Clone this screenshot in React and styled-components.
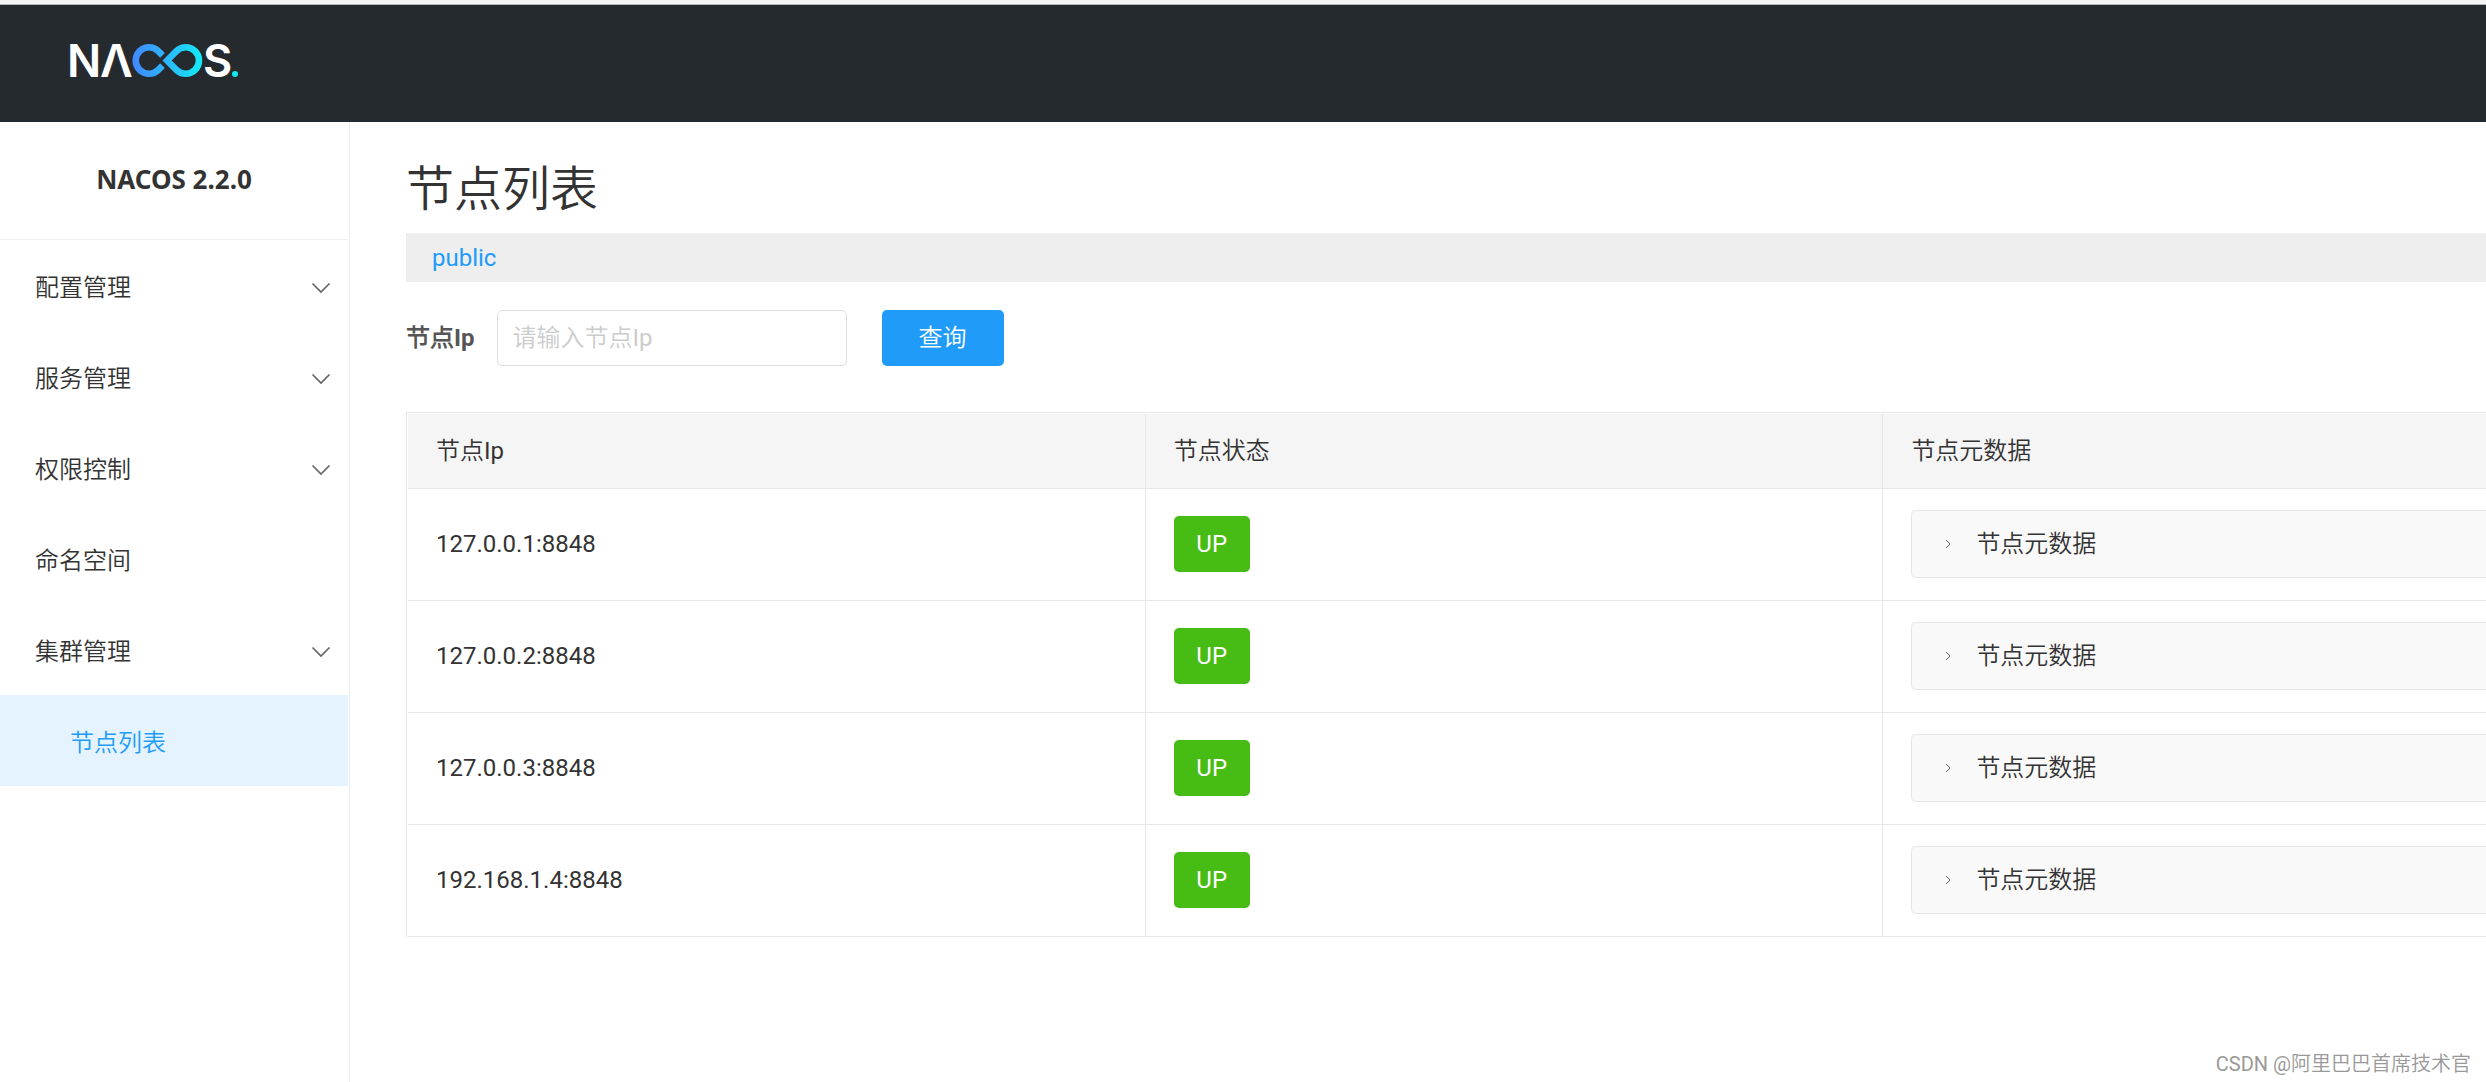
import React, { useState } from "react";
import styled, { createGlobalStyle } from "styled-components";

const menus = [
  { name: "配置管理", children: [] },
  { name: "服务管理", children: [] },
  { name: "权限控制", children: [] },
  { name: "命名空间" },
  { name: "集群管理", children: ["节点列表"] },
];

const nodes = [
  { address: "127.0.0.1:8848", state: "UP" },
  { address: "127.0.0.2:8848", state: "UP" },
  { address: "127.0.0.3:8848", state: "UP" },
  { address: "192.168.1.4:8848", state: "UP" },
];

const Logo = () => (
  <LogoSvg viewBox="0 0 170 34" role="img" aria-label="NACOS">
    <defs>
      <linearGradient id="loop" gradientUnits="userSpaceOnUse" x1="62" y1="0" x2="132" y2="0">
        <stop offset="0" stopColor="#4286ff" />
        <stop offset="1" stopColor="#14eaf6" />
      </linearGradient>
    </defs>
    <LogoText x="-3" y="33">N</LogoText>
    <LogoText x="30" y="33">Λ</LogoText>
    <g fill="none" stroke="url(#loop)" strokeWidth="6.6">
      <path d="M92.5 11.4L88.3 7.2A13.2 13.2 0 1 0 88.3 25.8L92.5 21.6" />
      <path d="M97.1 16.5L106.4 7.2A13.2 13.2 0 1 1 106.4 25.8Z" />
    </g>
    <LogoText x="133" y="33">S</LogoText>
    <circle cx="165" cy="30" r="3" fill="#14eaf6" />
  </LogoSvg>
);

const Chevron = () => (
  <svg width="20" height="12" viewBox="0 0 20 12" aria-hidden="true">
    <path d="M1.5 1.5L10 10L18.5 1.5" fill="none" stroke="#666" strokeWidth="1.7" />
  </svg>
);

const Arrow = () => (
  <svg width="6" height="10" viewBox="0 0 6 10" aria-hidden="true">
    <path d="M1 1L5 5L1 9" fill="none" stroke="#666" strokeWidth="1" />
  </svg>
);

const Sidebar = () => {
  const [open, setOpen] = useState("集群管理");

  return (
    <Aside>
      <Version>NACOS 2.2.0</Version>
      <Menu>
        {menus.map((menu) => (
          <li key={menu.name}>
            <MenuButton
              type="button"
              onClick={() => setOpen(open === menu.name ? "" : menu.name)}
            >
              {menu.name}
              {menu.children && <Chevron />}
            </MenuButton>
            {open === menu.name &&
              menu.children &&
              menu.children.map((child) => (
                <SubLink href="#/clusterManagement" key={child}>
                  {child}
                </SubLink>
              ))}
          </li>
        ))}
      </Menu>
    </Aside>
  );
};

const App = () => {
  const [ip, setIp] = useState("");
  const [list, setList] = useState(nodes);

  const search = (e) => {
    e.preventDefault();
    setList(nodes.filter((node) => node.address.includes(ip)));
  };

  return (
    <Page>
      <GlobalStyle />
      <Header>
        <Logo />
      </Header>
      <Body>
        <Sidebar />
        <Main>
          <Title>节点列表</Title>
          <Namespace>
            <a href="#/public">public</a>
          </Namespace>
          <SearchForm onSubmit={search}>
            <Label htmlFor="ip">节点Ip</Label>
            <Input
              id="ip"
              type="text"
              value={ip}
              placeholder="请输入节点Ip"
              onChange={(e) => setIp(e.target.value)}
            />
            <Button type="submit">查询</Button>
          </SearchForm>
          <TableBox>
            <Table>
              <thead>
                <tr>
                  <Th $width="35.5%">节点Ip</Th>
                  <Th $width="35.5%">节点状态</Th>
                  <Th>节点元数据</Th>
                </tr>
              </thead>
              <tbody>
                {list.map((node) => (
                  <tr key={node.address}>
                    <Td>{node.address}</Td>
                    <Td>
                      <Tag>{node.state}</Tag>
                    </Td>
                    <Td>
                      <Panel type="button">
                        <Arrow />
                        节点元数据
                      </Panel>
                    </Td>
                  </tr>
                ))}
              </tbody>
            </Table>
          </TableBox>
        </Main>
      </Body>
      <Watermark>CSDN @阿里巴巴首席技术官</Watermark>
    </Page>
  );
};

//STYLING
const GlobalStyle = createGlobalStyle`
* {
  box-sizing: border-box;
}
body {
  margin: 0;
  background-color: #fff;
  color: #333;
  font-family: Roboto, "Noto Sans CJK SC DemiLight", "Noto Sans CJK SC Light", "Noto Sans CJK SC", sans-serif;
  font-size: 24px;
  line-height: 36px;
}
button, input {
  font: inherit;
  color: inherit;
}
a {
  color: #209bfa;
  text-decoration: none;
}
`;

const Page = styled.div`
position: relative;
display: flex;
flex-direction: column;
min-height: 100vh;
border-top: 4px solid #f5f5f5;
overflow: hidden;
`;

const Header = styled.header`
display: flex;
padding: 39px 70px 44px;
border-top: 1px solid #b4b6b7;
background-color: #252a2f;
`;

const LogoSvg = styled.svg`
width: 170px;
height: 34px;
overflow: visible;
`;

const LogoText = styled.text`
font-family: Inter, sans-serif;
font-size: 45px;
font-weight: 600;
fill: #fff;
`;

const Body = styled.div`
display: flex;
flex: 1;
`;

// sidebar
const Aside = styled.aside`
flex: none;
width: 350px;
padding-right: 1px;
border-right: 1px solid #eee;
`;

const Version = styled.h2`
margin: 0;
padding: 39px 0 42px;
border-bottom: 1px solid #eee;
font-family: "Noto Sans", sans-serif;
font-size: 26px;
font-weight: 700;
text-align: center;
`;

const Menu = styled.ul`
margin: 0;
padding: 0;
list-style: none;
`;

const MenuButton = styled.button`
display: flex;
align-items: center;
justify-content: space-between;
width: 100%;
height: 91px;
padding: 4px 17px 0 35px;
border: none;
background: none;
cursor: pointer;
`;

const SubLink = styled.a`
display: flex;
align-items: center;
height: 91px;
padding: 4px 0 0 70px;
background-color: #e4f3fe;
`;

// content
const Main = styled.main`
flex: 1;
min-width: 0;
padding-left: 56px;
`;

const Title = styled.h1`
margin: 32px 0 7px;
font-size: 48px;
font-weight: 400;
line-height: 72px;
`;

const Namespace = styled.div`
padding: 7px 26px 6px;
background-color: #eee;
`;

const SearchForm = styled.form`
display: flex;
align-items: center;
margin: 28px 0 46px;
`;

const Label = styled.label`
margin-right: 22px;
color: #555;
font-weight: 700;
`;

const Input = styled.input`
width: 350px;
height: 56px;
margin-right: 35px;
padding: 0 15px;
border: 1px solid #ddd;
border-radius: 5px;

&::placeholder {
  color: #ccc;
}
`;

const Button = styled.button`
width: 122px;
height: 56px;
padding: 0;
border: none;
border-radius: 5px;
background-color: #209bfa;
color: #fff;
cursor: pointer;
`;

const TableBox = styled.div`
padding: 1px 0 0 1px;
border-top: 1px solid #e6e6e6;
border-left: 1px solid #e6e6e6;
`;

const Table = styled.table`
width: 100%;
table-layout: fixed;
border-collapse: separate;
border-spacing: 0;
`;

const Th = styled.th`
width: ${(props) => props.$width || "auto"};
height: 75px;
padding: 0 28px;
border-bottom: 1px solid #e6e6e6;
background-color: #f5f5f5;
font-weight: 400;
text-align: left;

&:not(:last-child) {
  border-right: 1px solid #e6e6e6;
}
`;

const Td = styled.td`
height: 112px;
padding: 0 28px 2px;
border-bottom: 1px solid #e6e6e6;

&:not(:last-child) {
  border-right: 1px solid #e6e6e6;
}
&:last-child {
  padding-right: 0;
}
`;

const Tag = styled.span`
display: flex;
align-items: center;
justify-content: center;
width: 76px;
height: 56px;
border-radius: 5px;
background-color: #46bc15;
color: #fff;
`;

const Panel = styled.button`
display: flex;
align-items: center;
gap: 25px;
width: 100%;
height: 68px;
padding: 0 0 0 33px;
border: 1px solid #e6e6e6;
border-right: none;
border-radius: 5px 0 0 5px;
background-color: #f9f9f9;
cursor: pointer;
`;

const Watermark = styled.div`
position: absolute;
right: 15px;
bottom: 0;
color: #999;
font-size: 20px;
`;

export default App;
